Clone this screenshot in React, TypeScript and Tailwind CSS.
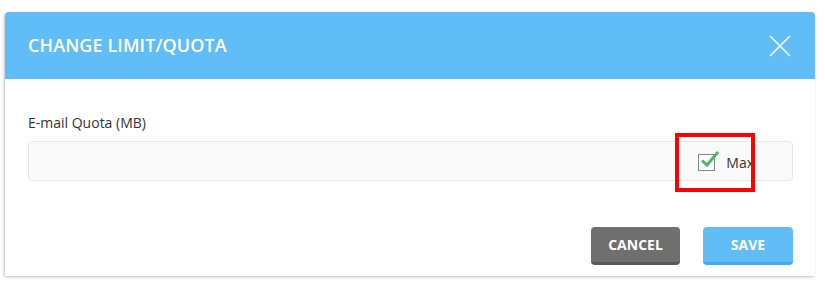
import React from 'react';

export default function App() {
  return (
    <div
      className="w-[825px] h-[283px] bg-white overflow-hidden pt-[12px] pl-[5px]"
      style={{ fontFamily: '"Open Sans", "Liberation Sans", sans-serif' }}
    >
      <div className="w-[810px] bg-white rounded-t-[4px] shadow-[-1px_1px_3px_rgba(0,0,0,0.25)]">
        {/* header */}
        <div className="h-[67px] bg-[#61bdf6] rounded-t-[4px] flex items-center justify-between pl-[23px] pr-[24px]">
          <h1 className="text-white text-[18px] font-semibold tracking-[0.1px]">CHANGE LIMIT/QUOTA</h1>
          <button type="button" aria-label="Close" className="w-[22px] h-[22px] flex items-center justify-center">
            <svg width="22" height="22" viewBox="0 0 22 22" fill="none" stroke="white" strokeWidth="1.6">
              <path d="M1 1L21 21M21 1L1 21" />
            </svg>
          </button>
        </div>

        {/* body */}
        <div className="pl-[23px] pr-[22px] pt-[34px]">
          <label className="block text-[14px] text-[#333] leading-[20px]">E-mail Quota (MB)</label>
          <div className="relative mt-[8px] h-[40px] bg-[#fafafa] border border-[#e6e6e6] rounded-[4px] flex items-center justify-end pr-[38px]">
            <div className="flex items-center gap-[11px] mt-[2px]">
              <span className="relative w-[17px] h-[17px] border-[1.5px] border-[#7f8899] bg-white">
                <svg className="absolute left-[1px] -top-[5px]" width="20" height="18" viewBox="0 0 20 18" fill="none">
                  <path d="M2 10.5L7 15L18 2" stroke="#4db86a" strokeWidth="3" />
                </svg>
              </span>
              <span className="text-[14px] text-[#333]">Max</span>
            </div>
            <div className="absolute left-[646px] -top-[9px] w-[80px] h-[59px] border-[4px] border-[#ff0000]" />
          </div>

          {/* footer */}
          <div className="flex justify-end gap-[23px] pt-[46px] pb-[11px]">
            <button
              type="button"
              className="w-[89px] h-[38px] rounded-[4px] bg-[#6f6f6f] border-b-[3px] border-[#595959] text-white text-[14px] font-bold"
            >
              CANCEL
            </button>
            <button
              type="button"
              className="w-[90px] h-[38px] rounded-[4px] bg-[#61bdf6] border-b-[3px] border-[#3eaaf2] text-white text-[14px] font-bold"
            >
              SAVE
            </button>
          </div>
        </div>
      </div>
    </div>
  );
}
